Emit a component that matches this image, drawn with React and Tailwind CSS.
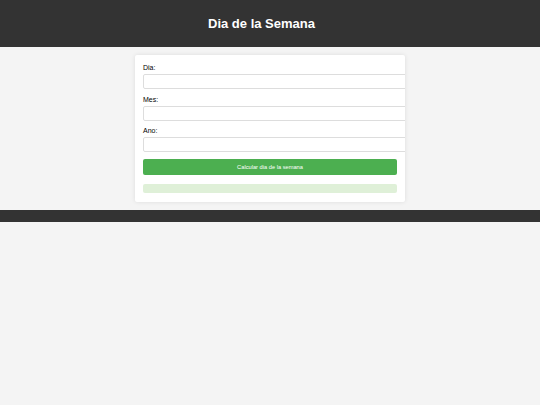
import React from 'react'

const Field = ({ label, first }) => (
    <div className={first ? '' : 'mt-[5.5px]'}>
        <label className="block text-[7px] leading-[10px] text-black">{label}</label>
        <input
            type="text"
            className="mt-[1px] block h-[15px] w-[266px] rounded-[2px] border border-[#dddddd] bg-white"
        />
    </div>
)

export default function App() {
    return (
        <div className="min-h-[405px] bg-[#f4f4f4] font-['Liberation_Sans',Arial,sans-serif]">
            <header className="flex h-[47px] items-center justify-center bg-[#333333] pr-[17px]">
                <h1 className="text-[13px] font-bold text-white">Dia de la Semana</h1>
            </header>

            {/* tarjeta del formulario */}
            <div className="mx-auto mt-[8px] w-[270px] overflow-hidden rounded-[2px] bg-white px-[8px] pt-[8px] pb-[9px] shadow-[0_0_4px_rgba(0,0,0,0.1)]">
                <Field label="Dia:" first />
                <Field label="Mes:" />
                <Field label="Ano:" />
                <button className="mt-[7px] block h-[16px] w-full rounded-[2px] bg-[#4caf50] text-[5.7px] text-white">
                    Calcular dia de la semana
                </button>
                <div className="mt-[9px] h-[9px] rounded-[2px] bg-[#dff0d8]" />
            </div>

            <footer className="mt-[8px] h-[12px] bg-[#333333]" />
        </div>
    )
}
